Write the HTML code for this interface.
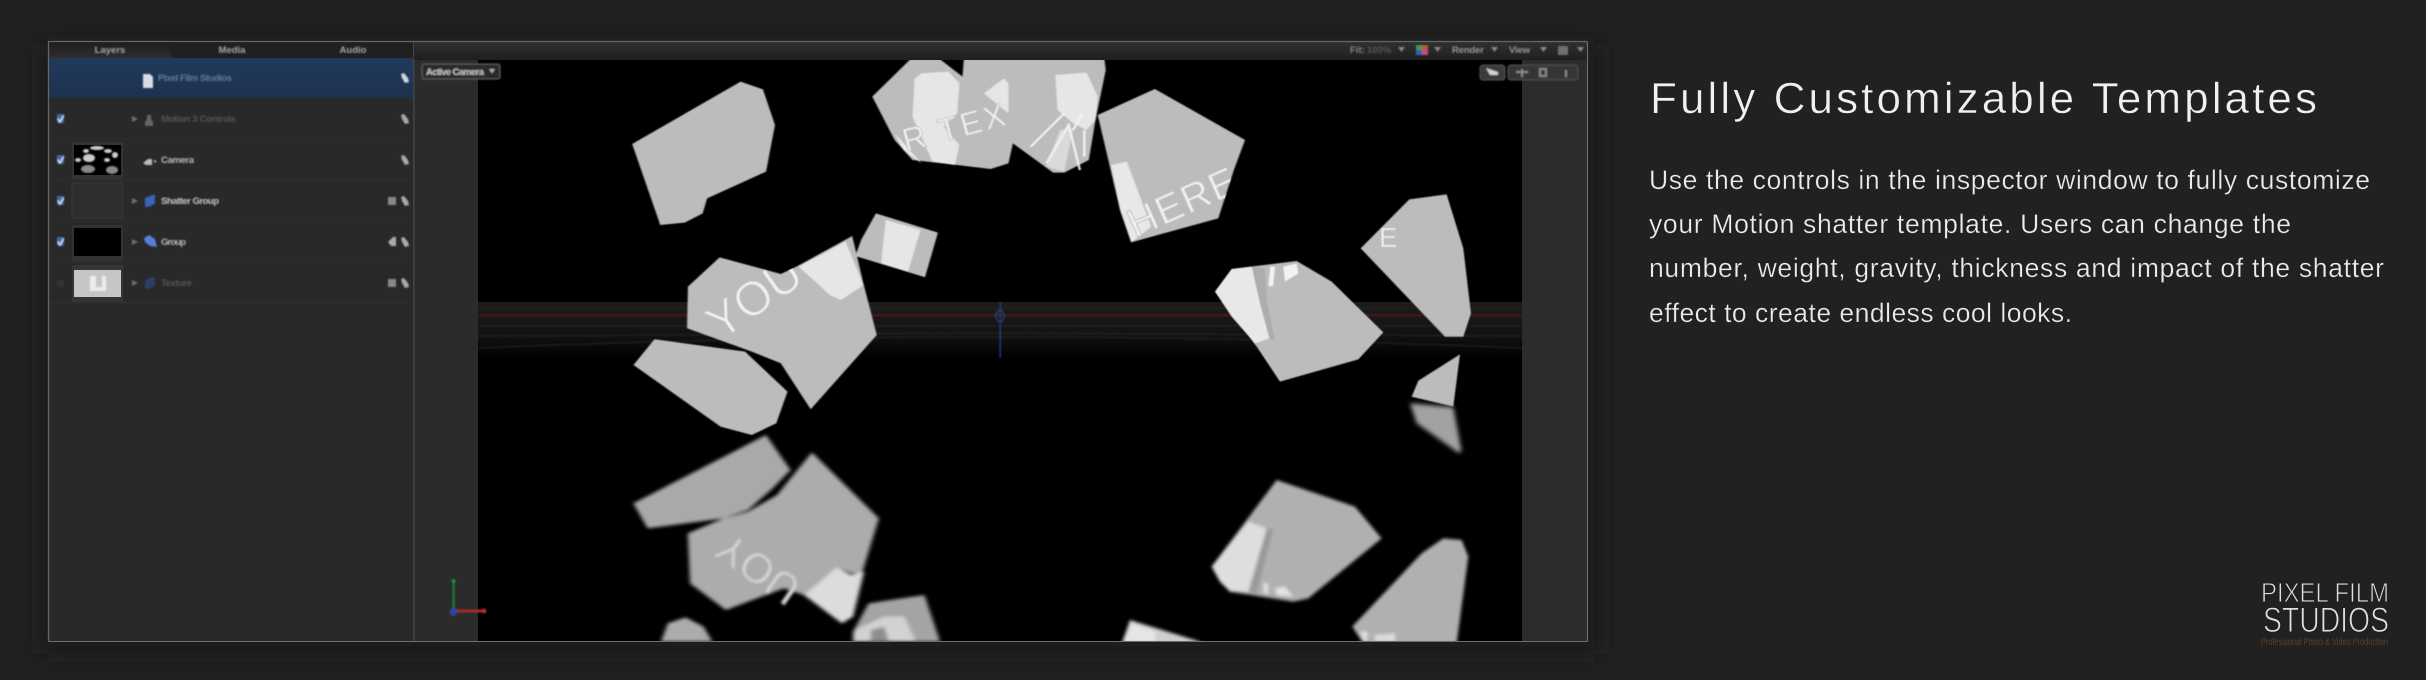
<!DOCTYPE html>
<html lang="en">
<head>
<meta charset="utf-8">
<title>Fully Customizable Templates</title>
<style>
html,body{margin:0;padding:0;background:#212121;width:2426px;height:680px;overflow:hidden}
svg{position:absolute;left:0;top:0;display:block}
text{font-family:"Liberation Sans",sans-serif}
.ui{font-weight:bold;font-size:9.5px}
</style>
</head>
<body>
<svg width="2426" height="680" viewBox="0 0 2426 680" xmlns="http://www.w3.org/2000/svg">
<defs>
<filter id="b03" x="-5%" y="-5%" width="110%" height="110%"><feGaussianBlur stdDeviation="1.6"/></filter>
<filter id="b1" x="-5%" y="-5%" width="110%" height="110%"><feGaussianBlur stdDeviation="4.5"/></filter>
<filter id="b2" x="-10%" y="-10%" width="120%" height="120%"><feGaussianBlur stdDeviation="7"/></filter>
<filter id="ui" x="-10%" y="-50%" width="120%" height="200%"><feGaussianBlur stdDeviation="0.8"/></filter>
<filter id="tx" x="-10%" y="-50%" width="120%" height="200%"><feGaussianBlur stdDeviation="0.5"/></filter>
<filter id="tx2" x="-10%" y="-50%" width="120%" height="200%"><feGaussianBlur stdDeviation="1.2"/></filter>
<filter id="sh" x="-10%" y="-15%" width="120%" height="130%"><feGaussianBlur stdDeviation="12"/></filter>
<linearGradient id="tb" x1="0" y1="0" x2="0" y2="1"><stop offset="0" stop-color="#303030"/><stop offset="1" stop-color="#1f1f1f"/></linearGradient>
<linearGradient id="tab" x1="0" y1="0" x2="0" y2="1"><stop offset="0" stop-color="#1d1d1d"/><stop offset="1" stop-color="#2e2e2e"/></linearGradient>
<linearGradient id="blue" x1="0" y1="0" x2="0" y2="1"><stop offset="0" stop-color="#223a5a"/><stop offset="1" stop-color="#1c3150"/></linearGradient>
<linearGradient id="band" x1="0" y1="0" x2="0" y2="1"><stop offset="0" stop-color="#1c1c1c"/><stop offset=".6" stop-color="#121212"/><stop offset="1" stop-color="#000"/></linearGradient>
<clipPath id="view"><rect x="478" y="60" width="1044" height="581"/></clipPath>
<clipPath id="cYou"><polygon transform="translate(600,50) scale(.4464,.3333)" points="268,622 405,672 440,650 565,558 590,700 620,855 472,1078 405,940 340,905 195,835 197,710"/></clipPath>
<clipPath id="cTop"><polygon transform="translate(600,50) scale(.4464,.3333)" points="610,140 695,28 762,28 812,80 815,28 1130,28 1133,60 1110,210 1095,330 1040,368 1015,368 925,280 915,340 875,357 800,345 700,330 660,270"/></clipPath>
<clipPath id="cHere"><polygon transform="translate(600,50) scale(.4464,.3333)" points="1115,195 1243,117 1445,270 1420,360 1385,505 1190,577 1165,480"/></clipPath>
<clipPath id="cH"><polygon transform="translate(1150,170) scale(.3333)" points="632,235 778,88 890,73 940,235 963,430 940,500 885,500"/></clipPath>
</defs>

<!-- panel shadow -->
<rect x="40" y="44" width="1562" height="610" fill="#151515" opacity=".55" filter="url(#sh)"/>

<!-- panel -->
<rect x="48" y="41" width="1540" height="601" fill="#2b2b2b"/>
<!-- sidebar -->
<rect x="49" y="42" width="364" height="599" fill="#292929"/>
<rect x="49" y="42" width="364" height="16" fill="#202020"/>
<rect x="49" y="42" width="122" height="16" fill="url(#tab)"/>
<rect x="49" y="58" width="364" height="40" fill="url(#blue)"/>
<g stroke="#2f2f2f" stroke-width="1">
<line x1="49" y1="139" x2="413" y2="139"/><line x1="49" y1="180" x2="413" y2="180"/><line x1="49" y1="221" x2="413" y2="221"/><line x1="49" y1="262" x2="413" y2="262"/><line x1="49" y1="303" x2="413" y2="303"/>
</g>
<rect x="413" y="41" width="1.5" height="600" fill="#444"/>
<!-- toolbar -->
<rect x="414" y="42" width="1173" height="18" fill="url(#tb)"/>
<!-- viewer -->
<rect x="415" y="60" width="63" height="581" fill="#2b2b2b"/>
<rect x="478" y="60" width="1044" height="581" fill="#000"/>
<rect x="1522" y="60" width="65" height="581" fill="#2c2c2c"/>

<!-- grid band -->
<g clip-path="url(#view)">
<rect x="478" y="302" width="1044" height="56" fill="url(#band)"/>
<g filter="url(#ui)">
<rect x="478" y="314" width="1044" height="2.5" fill="#471919"/>
<path d="M478 308H1522M478 326H1522M478 336L1000 333L1522 336M478 348Q1000 326 1522 348" stroke="#262626" stroke-width="1" fill="none"/>
<rect x="999.5" y="302" width="1.4" height="56" fill="#1d3f86"/>
<ellipse cx="1000" cy="316" rx="4" ry="6" fill="none" stroke="#24457f" stroke-width="1.2"/>
</g>
</g>

<!-- top shards -->
<g clip-path="url(#view)">
<g filter="url(#b03)" transform="translate(600,50) scale(.4464,.3333)">
<polygon fill="#bcbcbc" points="72,282 315,95 365,118 392,225 372,365 240,445 230,490 190,518 135,525"/>
<polygon fill="#bcbcbc" points="610,140 695,28 762,28 812,80 815,28 1130,28 1133,60 1110,210 1095,330 1040,368 1015,368 925,280 915,340 875,357 800,345 700,330 660,270"/>
<polygon fill="#e6e6e6" points="705,85 720,70 780,65 805,100 800,190 770,230 805,285 795,345 745,335 700,200"/>
<polygon fill="#e6e6e6" points="860,130 905,85 915,100 915,190"/>
<polygon fill="#e6e6e6" points="1020,75 1090,68 1115,140 1110,210 1090,240 1060,220 1025,180"/>
<polygon fill="#bcbcbc" points="1115,195 1243,117 1445,270 1420,360 1385,505 1190,577 1165,480"/>
<polygon fill="#e8e8e8" points="1145,345 1180,335 1235,530 1190,577 1165,480"/>
<polygon fill="#bcbcbc" points="618,490 757,548 728,682 572,618 585,570"/>
<polygon fill="#e6e6e6" points="640,510 718,540 690,665 630,640"/>
<polygon fill="#bcbcbc" points="268,622 405,672 440,650 565,558 590,700 620,855 472,1078 405,940 340,905 195,835 197,710"/>
<polygon fill="#e6e6e6" points="445,650 550,575 590,705 540,750 515,735"/>
<polygon fill="#bcbcbc" points="75,945 122,868 325,905 420,1025 395,1120 340,1155 270,1130"/>
<path d="M1000 350L1030 240L1060 235L1040 365Z" fill="#dadada"/>
<path d="M965 290L1040 190M1000 340L1050 225L1075 360M1060 240L1080 190M1085 240L1085 320" stroke="#f4f4f4" stroke-width="5" fill="none"/>
<path d="M680 300L720 340L660 250Z" fill="#eee"/>
</g>
<g filter="url(#b03)" transform="translate(1150,170) scale(.3333)">
<polygon fill="#bcbcbc" points="195,365 245,297 440,273 545,335 700,487 625,568 390,635 320,530"/>
<polygon fill="#a6a6a6" points="305,290 330,400 358,505 375,510 350,390 345,295" opacity=".7"/>
<polygon fill="#e8e8e8" points="195,365 245,297 305,290 330,400 358,505 315,520 245,440"/>
<polygon fill="#f2f2f2" points="400,290 440,280 445,310 405,335"/>
<rect x="358" y="290" width="14" height="58" fill="#f2f2f2" transform="rotate(6 365 320)"/>
<polygon fill="#bcbcbc" points="632,235 778,88 890,73 940,235 963,430 940,500 885,500"/>
<polygon fill="#bcbcbc" points="930,553 910,710 785,680 805,632"/>
</g>
<g fill="#f2f2f2">
<g clip-path="url(#cYou)"><text filter="url(#tx)" transform="translate(721,341) rotate(-35)" font-size="48" stroke="#bcbcbc" stroke-width="1.2">YOU</text></g>
<g clip-path="url(#cTop)"><text filter="url(#tx)" transform="translate(906,152) rotate(-15)" font-size="32" textLength="105" stroke="#bcbcbc" stroke-width=".7">R TEX</text></g>
<g clip-path="url(#cHere)"><text filter="url(#tx)" transform="translate(1135,238) rotate(-24)" font-size="40" textLength="115" stroke="#bcbcbc" stroke-width=".9">HERE</text></g>
<g clip-path="url(#cH)"><text filter="url(#tx)" transform="translate(1379,247)" font-size="28" stroke="#bcbcbc" stroke-width=".6">E</text></g>
</g>

<!-- reflection shards -->
<g filter="url(#b2)" transform="translate(1150,170) scale(.3333)">
<polygon fill="#a2a2a2" points="780,700 910,712 935,845 925,848 800,760"/>
</g>
<g filter="url(#b1)" transform="translate(420,420) scale(.4464,.3333)">
<polygon fill="#a9a9a9" points="478,250 775,45 830,150 790,205 735,270 680,295 510,325"/>
<polygon fill="#acacac" points="600,340 680,295 735,275 800,225 830,175 878,97 1028,295 990,460 965,460 935,440 860,525 815,505 685,570 605,490"/>
<polygon fill="#dcdcdc" points="860,525 935,440 965,465 995,455 970,590 945,610"/>
<polygon fill="#acacac" points="540,665 555,610 595,592 635,620 655,665"/>
<polygon fill="#a4a4a4" points="970,635 1005,550 1130,525 1165,665 970,665"/>
<polygon fill="#d2d2d2" points="975,630 1040,590 1085,590 1110,665 970,665"/>
<polygon fill="#8e8e8e" points="1010,630 1040,620 1050,665 1010,665"/>
</g>
<g clip-path="url(#view)">
<text filter="url(#tx2)" fill="#dadada" stroke="#acacac" stroke-width="1" font-size="42" transform="translate(729,531) rotate(35) scale(1,-1)">YOU</text>
</g>
<g filter="url(#b1)" transform="translate(1120,450) scale(.3333)">
<polygon fill="#b0b0b0" points="275,350 470,90 705,170 785,265 565,445 520,455 330,425 300,395"/>
<polygon fill="#9a9a9a" points="385,425 440,235 460,240 410,430"/>
<polygon fill="#dedede" points="275,350 385,215 440,235 385,425 330,425 300,395"/>
<polygon fill="#dedede" points="430,400 445,400 445,430 430,430"/>
<polygon fill="#e2e2e2" points="465,415 495,410 520,440 470,435"/>
<polygon fill="#b0b0b0" points="697,530 905,310 970,265 1025,270 1045,320 1010,580 730,580"/>
<polygon fill="#dcdcdc" points="720,545 745,545 740,575 730,575"/>
<polygon fill="#dcdcdc" points="765,555 825,550 825,575 765,575"/>
<polygon fill="#cfcfcf" points="5,580 30,510 240,575 240,580"/>
<polygon fill="#e6e6e6" points="15,575 35,520 105,545 105,575"/>
</g>
</g>

<!-- axis gizmo -->
<g filter="url(#ui)">
<rect x="452.5" y="580" width="2.2" height="30" fill="#1e7a36"/>
<circle cx="453.5" cy="581" r="2" fill="#1f8a3c"/>
<rect x="456" y="609.5" width="28" height="3" fill="#a42b26"/>
<circle cx="484" cy="611" r="2.4" fill="#b52f29"/>
<circle cx="453.5" cy="612" r="3.8" fill="#2c44a8"/>
</g>

<!-- panel border -->
<path d="M48.500 641.500V41.500H1587" fill="none" stroke="#666" stroke-width="1.3"/>
<path d="M48.500 641.500H1587.500V41.500" fill="none" stroke="#707070" stroke-width="1.1"/>

<!-- sidebar text + icons -->
<g filter="url(#ui)">
<text class="ui" fill="#a8a8a8" x="110" y="53" text-anchor="middle">Layers</text>
<text class="ui" fill="#a8a8a8" x="232" y="53" text-anchor="middle">Media</text>
<text class="ui" fill="#a8a8a8" x="353" y="53" text-anchor="middle">Audio</text>

<text class="ui" fill="#5f7b9d" x="158" y="81" textLength="74">Pixel Film Studios</text>
<text class="ui" fill="#555" x="161" y="122" textLength="75">Motion 3 Controls</text>
<text class="ui" fill="#bbb" x="161" y="163" textLength="33">Camera</text>
<text class="ui" fill="#c9c9c9" x="161" y="204" textLength="58">Shatter Group</text>
<text class="ui" fill="#b5b5c0" x="161" y="245" textLength="25">Group</text>
<text class="ui" fill="#555" x="161" y="286" textLength="31">Texture</text>

<!-- doc icon -->
<path d="M143 74h7l3 3v11h-10z" fill="#d6dde4"/>
<!-- rig icon -->
<path d="M145 126v-4l2-3v-4h4v4l2 3v4z" fill="#666"/>
<!-- camera -->
<path d="M143 163l5-4h4v6h-6z M153 161l3-1v3z" fill="#bbb"/>
<!-- group icons -->
<path d="M145 198l7-3h3v9l-7 3h-3z" fill="#3a62b4"/>
<path d="M144 238l5-3 6 4 2 8-7-1-5-4z" fill="#5580d8"/>
<path d="M145 280l7-3h3v9l-7 3h-3z" fill="#2d3c66"/>
<!-- triangles -->
<g fill="#6e6e6e">
<path d="M132 116l6 3-6 3z"/><path d="M132 198l6 3-6 3z"/><path d="M132 239l6 3-6 3z"/><path d="M132 280l6 3-6 3z"/>
</g>
<!-- checks -->
<g fill="none" stroke-linecap="round">
<rect x="57" y="114" width="7" height="9" rx="1" fill="#3d6aa8"/><path d="M58 119l2 3 3.500-6" stroke="#d6e2f0" stroke-width="1.500"/>
<rect x="57" y="155" width="7" height="9" rx="1" fill="#3d6aa8"/><path d="M58 160l2 3 3.500-6" stroke="#d6e2f0" stroke-width="1.500"/>
<rect x="57" y="196" width="7" height="9" rx="1" fill="#3d6aa8"/><path d="M58 201l2 3 3.500-6" stroke="#d6e2f0" stroke-width="1.500"/>
<rect x="57" y="237" width="7" height="9" rx="1" fill="#3d6aa8"/><path d="M58 242l2 3 3.500-6" stroke="#d6e2f0" stroke-width="1.500"/>
</g>
<rect x="57" y="280" width="7" height="7" rx="1" fill="#303030"/>
<!-- lock icons -->
<g fill="#cfd6dd">
<path d="M401 74l3-1 4 5 1 4-4 1-3-5z"/>
</g>
<g fill="#a8a8a8">
<path d="M401 115l3-1 4 5 1 4-4 1-3-5z"/><path d="M401 156l3-1 4 5 1 4-4 1-3-5z"/><path d="M401 197l3-1 4 5 1 4-4 1-3-5z"/><path d="M401 238l3-1 4 5 1 4-4 1-3-5z"/><path d="M401 279l3-1 4 5 1 4-4 1-3-5z"/>
</g>
<g fill="#888">
<rect x="388" y="197" width="8" height="8"/><rect x="388" y="279" width="8" height="8"/><path d="M388 242l5-5h3v9h-5z" fill="#aaa"/>
</g>
</g>

<!-- thumbnails -->
<rect x="72" y="142" width="51" height="37" fill="#333"/>
<rect x="74" y="145" width="47" height="30" fill="#000"/>
<g filter="url(#ui)" fill="#ccc">
<ellipse cx="97" cy="148" rx="7" ry="2"/><ellipse cx="108" cy="151" rx="4" ry="2"/><ellipse cx="86" cy="151" rx="3" ry="2"/>
<ellipse cx="89" cy="158" rx="6" ry="4"/><ellipse cx="115" cy="155" rx="3" ry="3"/><ellipse cx="107" cy="160" rx="3" ry="2"/>
<ellipse cx="88" cy="169" rx="7" ry="4" fill="#888"/><ellipse cx="112" cy="170" rx="6" ry="4" fill="#888"/><ellipse cx="78" cy="160" rx="3" ry="2"/>
</g>
<rect x="72" y="183" width="51" height="35" fill="#2e2e2e" stroke="#363636"/>
<rect x="72" y="225" width="51" height="36" fill="#333"/>
<rect x="74" y="228" width="47" height="28" fill="#000"/>
<rect x="72" y="265" width="51" height="37" fill="#343434"/>
<rect x="74" y="270" width="47" height="27" fill="#c6c6c6"/>
<path d="M90 276h6v11h6v-11h4v15h-16z" fill="#ececec" filter="url(#ui)"/>

<!-- toolbar right -->
<g filter="url(#ui)">
<text class="ui" fill="#888" x="1350" y="53">Fit:</text>
<text class="ui" fill="#555" x="1367" y="53">100%</text>
<path d="M1398 47h7l-3.500 5z" fill="#888"/>
<rect x="1416" y="45" width="6" height="5" fill="#3f9a4f"/><rect x="1422" y="45" width="6" height="5" fill="#b75a3a"/><rect x="1416" y="50" width="6" height="5" fill="#3c5fb0"/><rect x="1422" y="50" width="6" height="5" fill="#c84a8a"/>
<path d="M1434 47h7l-3.500 5z" fill="#888"/>
<text class="ui" fill="#999" x="1452" y="53" textLength="32">Render</text>
<path d="M1491 47h7l-3.500 5z" fill="#888"/>
<text class="ui" fill="#999" x="1509" y="53" textLength="21">View</text>
<path d="M1540 47h7l-3.500 5z" fill="#888"/>
<rect x="1558" y="46" width="10" height="9" fill="#707070"/>
<path d="M1577 47h7l-3.500 5z" fill="#888"/>
<!-- active camera -->
<rect x="422" y="64" width="78" height="15" rx="2" fill="#2a2a2a" stroke="#666"/>
<text class="ui" fill="#c4c4c4" x="426" y="75" textLength="58">Active Camera</text>
<path d="M489 69h6l-3 4.500z" fill="#aaa"/>
<!-- viewer buttons -->
<rect x="1480" y="65" width="25" height="15" rx="3" fill="#3a3a3a" stroke="#555"/>
<path d="M1486 68l12 4v3h-8z" fill="#d0d0d0"/>
<rect x="1508" y="65" width="70" height="15" rx="3" fill="#353535" stroke="#555"/>
<path d="M1516 72h12M1522 69v8M1540 69h6v7h-6zM1566 70v7" stroke="#888" stroke-width="2" fill="none"/>
</g>

<!-- right copy -->
<g fill="#f0f0f0" stroke="#212121" stroke-width=".5">
<text x="1650" y="113" font-size="44" textLength="667" lengthAdjust="spacing">Fully Customizable Templates</text>
</g>
<g fill="#ececec" stroke="#212121" stroke-width=".3" font-size="26.5">
<text x="1649" y="189" textLength="721" lengthAdjust="spacing">Use the controls in the inspector window to fully customize</text>
<text x="1649" y="233" textLength="642" lengthAdjust="spacing">your Motion shatter template. Users can change the</text>
<text x="1649" y="277" textLength="735" lengthAdjust="spacing">number, weight, gravity, thickness and impact of the shatter</text>
<text x="1649" y="322" textLength="423" lengthAdjust="spacing">effect to create endless cool looks.</text>
</g>

<!-- logo -->
<text x="2261" y="602" font-size="28" fill="#e0e0e0" stroke="#212121" stroke-width=".9" textLength="128" lengthAdjust="spacingAndGlyphs">PIXEL FILM</text>
<text x="2263" y="632" font-size="35" fill="#e0e0e0" stroke="#212121" stroke-width="1" textLength="126" lengthAdjust="spacingAndGlyphs">STUDIOS</text>
<text x="2261" y="645" font-size="10" fill="#5c4128" textLength="127" lengthAdjust="spacingAndGlyphs">Professional Photo &amp; Video Production</text>
</svg>
</body>
</html>
